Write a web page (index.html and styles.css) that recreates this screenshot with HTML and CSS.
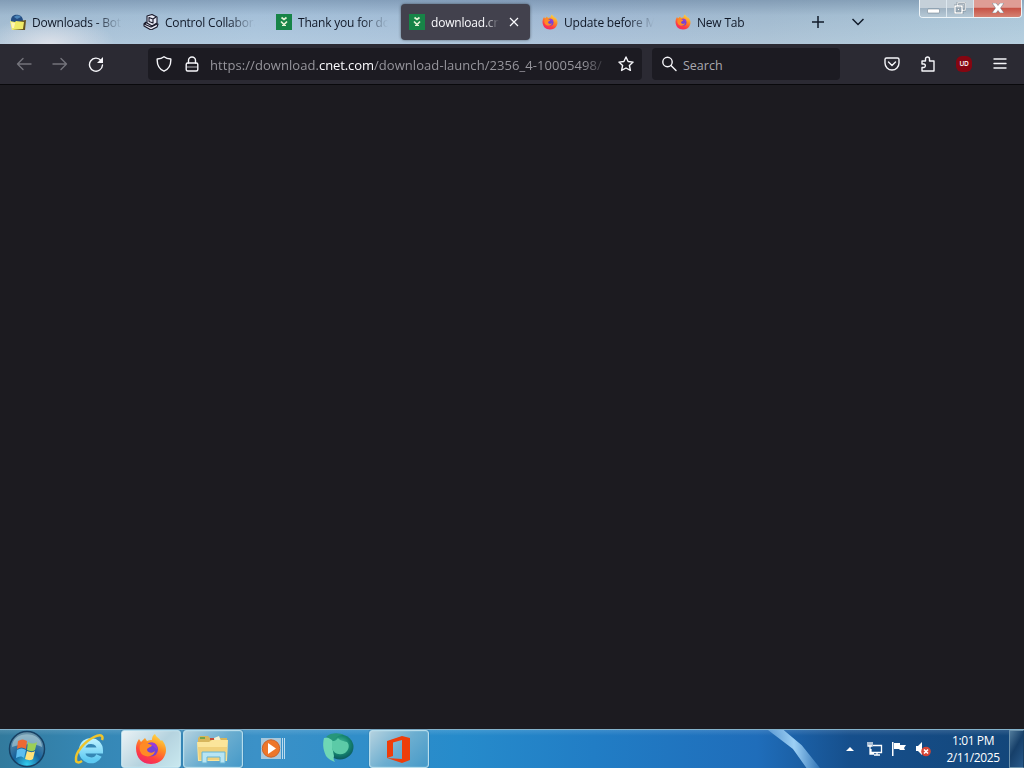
FILE: index.html
```
<!DOCTYPE html>
<html lang="en">
<head>
    <meta charset="UTF-8">
    <meta name="viewport" content="width=device-width, initial-scale=1.0">
    <title>download.cnet.com</title>
    <link rel="stylesheet" href="styles.css">
</head>
<body>
    <!-- shared icons -->
    <svg class="defs" width="0" height="0">
        <defs>
            <linearGradient id="foxBody" x1="0.8" y1="0" x2="0.3" y2="1">
                <stop offset="0" stop-color="#ffe04a"/>
                <stop offset="0.4" stop-color="#ff8f22"/>
                <stop offset="0.75" stop-color="#ff3f42"/>
                <stop offset="1" stop-color="#ee2868"/>
            </linearGradient>
            <radialGradient id="orb" cx="0.5" cy="0.95" r="0.9">
                <stop offset="0" stop-color="#32cff0"/>
                <stop offset="0.45" stop-color="#17629c"/>
                <stop offset="1" stop-color="#6a94aa"/>
            </radialGradient>
            <linearGradient id="ieBlue" x1="0" y1="0" x2="0" y2="1">
                <stop offset="0" stop-color="#b5efff"/>
                <stop offset="1" stop-color="#5cc9f2"/>
            </linearGradient>
            <radialGradient id="teal" cx="0.5" cy="0.4" r="0.6">
                <stop offset="0" stop-color="#50c9a4"/>
                <stop offset="0.6" stop-color="#16866f"/>
                <stop offset="1" stop-color="#0a5960"/>
            </radialGradient>
            <symbol id="firefox" viewBox="0 0 32 32">
                <path fill="url(#foxBody)" d="M1 15c0-3 1-6 3-9l2 3 4-4 2 3c2-1 3-1 5-1 0-3 1-5 3-6 1 3 4 4 6 7l1-1c4 5 5 10 3 15-2 6-8 9-14 9C7 31 1 25 1 15z"/>
                <circle cx="16" cy="16.500" r="7" fill="#7543d5"/>
                <path fill="#ff8a25" d="M5 12c3-3 6-3 9-1l3 1c-1 3-5 2-5 5 1 3 5 4 8 1-1 5-7 7-12 4-3-2-4-6-3-10z"/>
                <path fill="#9a3cda" d="M15 10c4-2 8 2 7 7-1-2-3-3-4-4-1-1-2-1-3-3z"/>
            </symbol>
            <symbol id="cnet" viewBox="0 0 16 16">
                <path fill="#178447" d="M0 0h16v16H0z"/>
                <path fill="none" stroke="#e5f4d6" stroke-width="1.7" d="m5.500 3.500 2.500 2 2.500-2M5 7.500l3 3 3-3"/>
                <path stroke="#e5f4d6" d="M6 11.500h4"/>
            </symbol>
        </defs>
    </svg>

    <header class="tabstrip">
        <div class="tab">
            <svg class="favicon" viewBox="0 0 16 16">
                <path fill="#244d82" d="M1 6c0-7 12-7 12 1v4H1z"/>
                <path fill="#4c86ba" d="M4 3c2-2 5-2 7 0L7 5z"/>
                <path fill="#675522" d="m10 7 6-1-1 10H3z"/>
                <path fill="#efeb69" d="m0 7 5 1 1-1 8 1-1 7-11 1z"/>
                <path fill="#fff5b5" d="m1 8 4 1-1 5H2z"/>
            </svg>
            <span class="tab-title">Downloads - Botkind</span>
        </div>
        <div class="tab">
            <svg class="favicon" viewBox="0 0 16 16" fill="#e5e7f3" stroke="#171728" stroke-width="1.1" stroke-linejoin="round">
                <path d="m1 10 4-2 10 2-1 3-6 3-7-4z"/>
                <path d="m4 2 5-1.500 5 2.500v6l-5 3-5-3z"/>
                <path d="M6 3.500 10 5v4L6 7.500zM10 5l3-2"/>
                <path fill="none" d="m1 10 7 3 6-3M3 8l-2 2"/>
            </svg>
            <span class="tab-title">Control Collaboration</span>
        </div>
        <div class="tab">
            <svg class="favicon"><use href="#cnet"/></svg>
            <span class="tab-title">Thank you for downloading</span>
        </div>
        <div class="tab active">
            <svg class="favicon"><use href="#cnet"/></svg>
            <span class="tab-title">download.cnet.com</span>
            <svg class="tab-close" viewBox="0 0 10 10"><path d="m1 1 8 8M9 1 1 9"/></svg>
        </div>
        <div class="tab">
            <svg class="favicon"><use href="#firefox"/></svg>
            <span class="tab-title">Update before March</span>
        </div>
        <div class="tab">
            <svg class="favicon"><use href="#firefox"/></svg>
            <span class="tab-title">New Tab</span>
        </div>
        <div class="tab-tools">
            <svg width="12" height="12" viewBox="0 0 12 12"><path d="M6 0v12M0 6h12"/></svg>
            <svg width="12" height="8" viewBox="0 0 12 8"><path d="m.5 1 5.500 5.500L11.500 1"/></svg>
        </div>
        <div class="window-controls">
            <div class="wc minimize"><svg width="13" height="6" viewBox="0 0 13 6"><rect x=".5" y="1" width="12" height="4" rx="1"/></svg></div>
            <div class="wc restore"><svg width="12" height="12" viewBox="0 0 12 12"><path fill-rule="evenodd" d="M3 0h9v9H9v3H0V3h3zm1.500 1.500V3H9v4.500h1.500v-6zM2 5v5h5V5zm1.500 1.500h2v2h-2z"/></svg></div>
            <div class="wc close"><svg width="12" height="10" viewBox="0 0 12 10"><path d="M0 0h4l2 2.500L8 0h4L8.500 5l3.500 5H8L6 7.500 4 10H0l3.500-5z"/></svg></div>
        </div>
    </header>

    <nav class="toolbar">
        <div class="nav-buttons">
            <svg class="dim" viewBox="0 0 16 16"><path d="M15 8H1.500M7 2.500 1.500 8 7 13.500"/></svg>
            <svg class="dim" viewBox="0 0 16 16"><path d="M1 8h13.500M9 2.500l5.500 5.500L9 13.500"/></svg>
            <svg viewBox="0 0 16 16"><path d="M13 4.500A6.500 6.500 0 1 0 14.500 9"/><path class="solid" d="M15 1v6H9z"/></svg>
        </div>
        <div class="urlbar">
            <svg viewBox="0 0 16 16"><path d="M8 .8C6 2.500 3.500 3 1.200 3c-.3 6 1.500 10 6.800 12.200C13.300 13 15.100 9 14.800 3 12.500 3 10 2.500 8 .8z"/></svg>
            <svg viewBox="0 0 16 16"><path d="M4.500 7V4.500a3.500 3.500 0 0 1 7 0V7"/><rect x="2.200" y="7" width="11.600" height="8" rx="1.500"/><path d="M3 11h10" stroke-width=".7"/></svg>
            <span class="url">https://download.<b>cnet.com</b>/download-launch/2356_4-10005498/</span>
            <svg viewBox="0 0 16 16"><path d="m8 1 2.100 4.500 5 .6-3.700 3.400 1 4.900L8 12l-4.400 2.400 1-4.900L.9 6.100l5-.6z"/></svg>
        </div>
        <div class="searchbar">
            <svg viewBox="0 0 16 16"><circle cx="6.500" cy="6" r="4.700"/><path d="m10 9.500 5 5"/></svg>
            <span>Search</span>
        </div>
        <div class="actions">
            <svg viewBox="0 0 16 16"><path d="M2.500 2h11a1.500 1.500 0 0 1 1.500 1.500V7A7 7 0 0 1 1 7V3.500A1.500 1.500 0 0 1 2.500 2z"/><path d="m4.500 6 3.500 3.500L11.500 6"/></svg>
            <svg viewBox="0 0 16 16"><path d="M2 5h3.500V3a2 2 0 0 1 4 0v2H14v10H2v-3.500h2a1.800 1.800 0 0 0 0-3.500H2z"/></svg>
            <span class="ublock">UD</span>
            <svg viewBox="0 0 16 16"><path d="M2 3h12M2 7.500h12M2 12h12"/></svg>
        </div>
    </nav>

    <main class="page"></main>

    <footer class="taskbar">
        <div class="start">
            <svg width="38" height="38" viewBox="0 0 38 38">
                <circle cx="19" cy="19" r="17.500" fill="url(#orb)" stroke="#174164" stroke-width="1.500"/>
                <path fill="#b9d7df" opacity=".55" d="M4 17C4 0 34 0 34 17c-8-4-20-3-30 0z"/>
                <path fill="#ed6933" d="M10 11c3-2 6-2 9 0l-1 8c-3-2-6-2-9 0z"/>
                <path fill="#9bcf58" d="M20 12c3 2 6 2 9 0l-2 8c-3 2-5 1-8 0z"/>
                <path fill="#5cbef0" d="M9 20c3-2 6-2 9 0l-2 8c-2-2-5-2-8 0z"/>
                <path fill="#ffe27a" d="M19 21c3 1 5 2 8 0l-2 8c-3 2-5 1-8 0z"/>
            </svg>
        </div>
        <div class="task">
            <svg width="32" height="32" viewBox="0 0 32 32">
                <path fill="none" stroke="url(#ieBlue)" stroke-width="6" d="M9 17.500h18c0-12-17-13-18-1-1 12 13 14 17 6"/>
                <path fill="none" stroke="#efc52c" stroke-width="2.500" d="M29 7c2-5-2-6-8-3C11 9 2 20 3 27c0 3 3 3 6 1"/>
            </svg>
        </div>
        <div class="task open current">
            <svg width="32" height="32"><use href="#firefox"/></svg>
        </div>
        <div class="task open">
            <svg width="34" height="32" viewBox="0 0 34 32">
                <path fill="#d7b65c" d="M2 5 4 3h8l2 2h17v21H2z"/>
                <path fill="#74a44a" d="M4 4h5v2H4z"/>
                <path fill="#c84c38" d="M14 5h4v2h-4z"/>
                <path fill="#f4f1d2" d="m18 5 5-2 2 5-6 2z"/>
                <path fill="#fbe59a" d="M1 9h12l3-2h16l-1 21H2z"/>
                <path fill="#f0d17b" d="M2 14h29l-1 13H3z"/>
                <path fill="#b8e5f3" stroke="#67b5d4" d="M6 30V19h23v11h-5v-6H11v6z"/>
            </svg>
        </div>
        <div class="task player">
            <svg width="26" height="24" viewBox="0 0 26 24">
                <path fill="#a7c8dd" d="M1 1h20v21H1z"/>
                <path stroke="#bddcf0" d="M22.500 1v21M24.500 1v21"/>
                <circle cx="11" cy="11.500" r="8.700" fill="#ed762a" stroke="#c9652f"/>
                <path fill="#fff" d="m8 6 8 5.500L8 17z"/>
            </svg>
        </div>
        <div class="task teal-app">
            <svg width="32" height="30" viewBox="0 0 32 30">
                <ellipse cx="18" cy="14" rx="13.500" ry="12.500" fill="url(#teal)"/>
                <path fill="#6fd7b5" d="M2 5c-2 8 0 13 2 18 2 3 6 5 9 6-1-2-2-3-1-6l-2-10 1-9z"/>
                <path fill="#5ccaa7" d="M10 8c2 0 4 0 6-3 2 3 6 3 9 4 3 3 2 8-2 11-6 3-12 0-13-5z"/>
                <path fill="#27967a" d="M4 4c5-5 14-4 18-2-5 0-8 2-11 6-2-2-4-3-7-4z"/>
            </svg>
        </div>
        <div class="task open">
            <svg width="26" height="30" viewBox="0 0 26 30">
                <path fill="#ee3d0a" d="m1 7 15-5 8 2v22l-8 3-15-5 15 1V6L7 8.500V22l-6 2z"/>
            </svg>
        </div>
        <div class="tray">
            <svg class="caret" width="8" height="4" viewBox="0 0 8 4"><path d="m0 4 4-4 4 4z"/></svg>
            <svg width="16" height="16" viewBox="0 0 16 16">
                <path fill="none" stroke="#fff" stroke-width="1.300" d="M6 4.500h8.500v7H4V8M1 1v4h4V1M3 1v12h4M7 14h6M10 11v3"/>
            </svg>
            <svg width="16" height="16" viewBox="0 0 16 16">
                <path fill="#fff" d="M1 1h1.500v14H1zM3 2h6v2h6l-2 3 1 2H9L8 8H3z"/>
            </svg>
            <svg width="16" height="16" viewBox="0 0 16 16">
                <path fill="#fff" d="M1 5h2l4-4v13l-4-4H1z"/>
                <circle cx="11" cy="10.500" r="4.800" fill="#d64535"/>
                <path stroke="#fff" stroke-width="1.600" d="m9 8.500 4 4m0-4-4 4"/>
            </svg>
            <div class="clock">
                <div>1:01 PM</div>
                <div>2/11/2025</div>
            </div>
            <div class="show-desktop"></div>
        </div>
    </footer>
</body>
</html>
```

FILE: styles.css
```
* {
    margin: 0;
    padding: 0;
    box-sizing: border-box;
}

body {
    width: 1024px;
    height: 768px;
    display: flex;
    flex-direction: column;
    overflow: hidden;
    background: #1c1b20;
    font-family: "Open Sans", "Noto Sans", sans-serif;
    font-size: 12px;
}

svg {
    display: block;
    flex-shrink: 0;
}

.defs {
    width: 0;
    height: 0;
}

/* Tabs */
.tabstrip {
    height: 44px;
    flex-shrink: 0;
    display: flex;
    background:
        radial-gradient(ellipse 65px 28px at 50px 44px, rgba(236,234,239,0.75), transparent),
        linear-gradient(180deg, rgba(80,108,140,0.4), rgba(130,160,190,0.1) 35%, rgba(205,222,234,0.25)),
        linear-gradient(90deg, #a4bdd2, #a9c4dc 25%, #a3bbd5 55%, #a5bdd1 75%, #b0cbdc);
}

.tab {
    width: 129px;
    height: 36px;
    margin: 4px 2px 0;
    padding: 0 9px 0 8px;
    display: flex;
    align-items: center;
    gap: 6px;
    border-radius: 4px;
    color: #101827;
}

.tab.active {
    background: #42414d;
    color: #fbfbfe;
    box-shadow: 0 0 3px rgba(0,0,0,0.5);
}

.favicon {
    width: 16px;
    height: 16px;
}

.tab-title {
    flex: 1;
    padding-top: 1px;
    overflow: hidden;
    white-space: nowrap;
    line-height: 18px;
    letter-spacing: -0.2px;
    mask-image: linear-gradient(90deg, #000 calc(100% - 26px), transparent);
}

.active .tab-title {
    mask-image: linear-gradient(90deg, #000 calc(100% - 14px), transparent);
}

.tab-close {
    width: 10px;
    height: 10px;
    margin: 0 2px 0 4px;
    stroke: #fbfbfe;
    stroke-width: 1.2;
}

.tab-tools {
    display: flex;
    align-items: center;
    gap: 28px;
    margin-left: 14px;
}

.tab-tools svg {
    fill: none;
    stroke: #111b2a;
    stroke-width: 1.5;
}

.window-controls {
    display: flex;
    height: 18px;
    margin-left: auto;
    margin-right: 2px;
    border: 1px solid #edf4f8;
    border-top: none;
    border-radius: 0 0 4px 4px;
    overflow: hidden;
}

.wc {
    width: 27px;
    display: flex;
    align-items: center;
    justify-content: center;
    border-right: 1px solid #dce7ef;
    background: linear-gradient(#c5d0d9 45%, #9fb2c2 50%, #b6c9d6);
}

.wc svg {
    fill: #fff;
    stroke: #667482;
    stroke-width: 0.5;
}

.wc.minimize svg {
    margin-top: 4px;
}

.wc.restore svg,
.wc.close svg {
    margin-top: -1px;
}

.wc.close {
    width: 47px;
    border-right: none;
    background: linear-gradient(#df9d95 43%, #c75245 48%, #d58273);
}

/* Navigation toolbar */
.toolbar {
    height: 41px;
    flex-shrink: 0;
    display: flex;
    align-items: center;
    background: #2b2a33;
    border-bottom: 1px solid #09090c;
    font-size: 13px;
}

.toolbar svg {
    width: 16px;
    height: 16px;
    fill: none;
    stroke: #f6f6fa;
    stroke-width: 1.4;
    stroke-linejoin: round;
    stroke-linecap: round;
}

.toolbar .dim {
    stroke: #74737b;
}

.toolbar .solid {
    fill: #f6f6fa;
    stroke: none;
}

.nav-buttons {
    width: 148px;
    padding-left: 16px;
    display: flex;
    gap: 20px;
}

.urlbar {
    width: 494px;
    height: 32px;
    padding: 0 8px;
    display: flex;
    align-items: center;
    gap: 12px;
    border-radius: 4px;
    background: #1c1b22;
}

.url {
    width: 398px;
    margin-left: -2px;
    margin-right: -2px;
    padding-top: 2px;
    overflow: hidden;
    white-space: nowrap;
    color: #96959c;
    font-size: 13px;
    letter-spacing: 0.07px;
    mask-image: linear-gradient(90deg, #000 calc(100% - 24px), transparent);
}

.url b {
    font-weight: 400;
    letter-spacing: -0.1px;
    color: #fbfbfe;
}

.searchbar {
    width: 188px;
    height: 32px;
    margin-left: 10px;
    padding-left: 9px;
    display: flex;
    align-items: center;
    gap: 6px;
    border-radius: 4px;
    background: #1c1b22;
    color: #aaa9b0;
    font-size: 12.5px;
}

.searchbar span {
    padding-top: 2px;
}

.actions {
    display: flex;
    align-items: center;
    gap: 20px;
    margin-left: auto;
    padding-right: 16px;
}

.ublock {
    width: 16px;
    height: 16px;
    border-radius: 6px;
    background: #850611;
    color: #fff;
    font-size: 6.5px;
    font-weight: 600;
    line-height: 15px;
    letter-spacing: -0.3px;
    text-align: center;
}

.page {
    flex: 1;
    background: #1c1b20;
}

/* Taskbar */
.taskbar {
    height: 39px;
    flex-shrink: 0;
    display: flex;
    border-top: 1px solid #83b3cc;
    background:
        linear-gradient(rgba(255,255,255,0.12), transparent 15%),
        linear-gradient(90deg, #327a9d 0, #3587b5 9%, #3b91c7 25%, #268bcb 45%, #217dc5 58%, #1f6dba 74%, #164f8c 83%, #134679 100%);
    position: relative;
}

/* light streak of the wallpaper behind the glass */
.taskbar::before {
    content: "";
    position: absolute;
    left: 768px;
    top: 0;
    width: 52px;
    height: 38px;
    background: linear-gradient(90deg, rgba(142,197,241,0.5), #9dd0f5 50%, rgba(70,140,205,0.5));
    clip-path: polygon(0 0, 30% 0, 65% 40%, 100% 100%, 74% 100%, 48% 50%);
}

.start {
    width: 59px;
    padding-left: 8px;
}

.task {
    width: 60px;
    height: 38px;
    margin-right: 2px;
    display: flex;
    align-items: center;
    justify-content: center;
}

.task.player {
    padding-right: 4px;
}

.task.teal-app {
    padding-left: 2px;
    padding-bottom: 3px;
}

.task.open {
    border: 1px solid #b6ddec;
    border-radius: 3px;
    background: linear-gradient(135deg, #b5d2df, #6caed0 50%, #4599c8);
    box-shadow: inset 0 0 1px #e9faff, 0 0 1px #143d59;
}

.task.open.current {
    background: linear-gradient(135deg, #eaf2f5, #b5d3df 55%, #c9e8ef);
}

.tray {
    margin-left: auto;
    display: flex;
    align-items: center;
    gap: 8px;
    color: #fff;
}

.tray .caret {
    margin-right: 5px;
    fill: #fff;
}

.clock {
    width: 64px;
    margin-left: 2px;
    font-size: 12px;
    line-height: 17px;
    letter-spacing: -0.4px;
    text-align: center;
}

.show-desktop {
    width: 15px;
    height: 38px;
    margin-left: -4px;
    border: 1px solid #6d93ad;
    border-right-color: #173e62;
    background: linear-gradient(120deg, #517b9b, #163f69 45%, #28598a);
}
```
